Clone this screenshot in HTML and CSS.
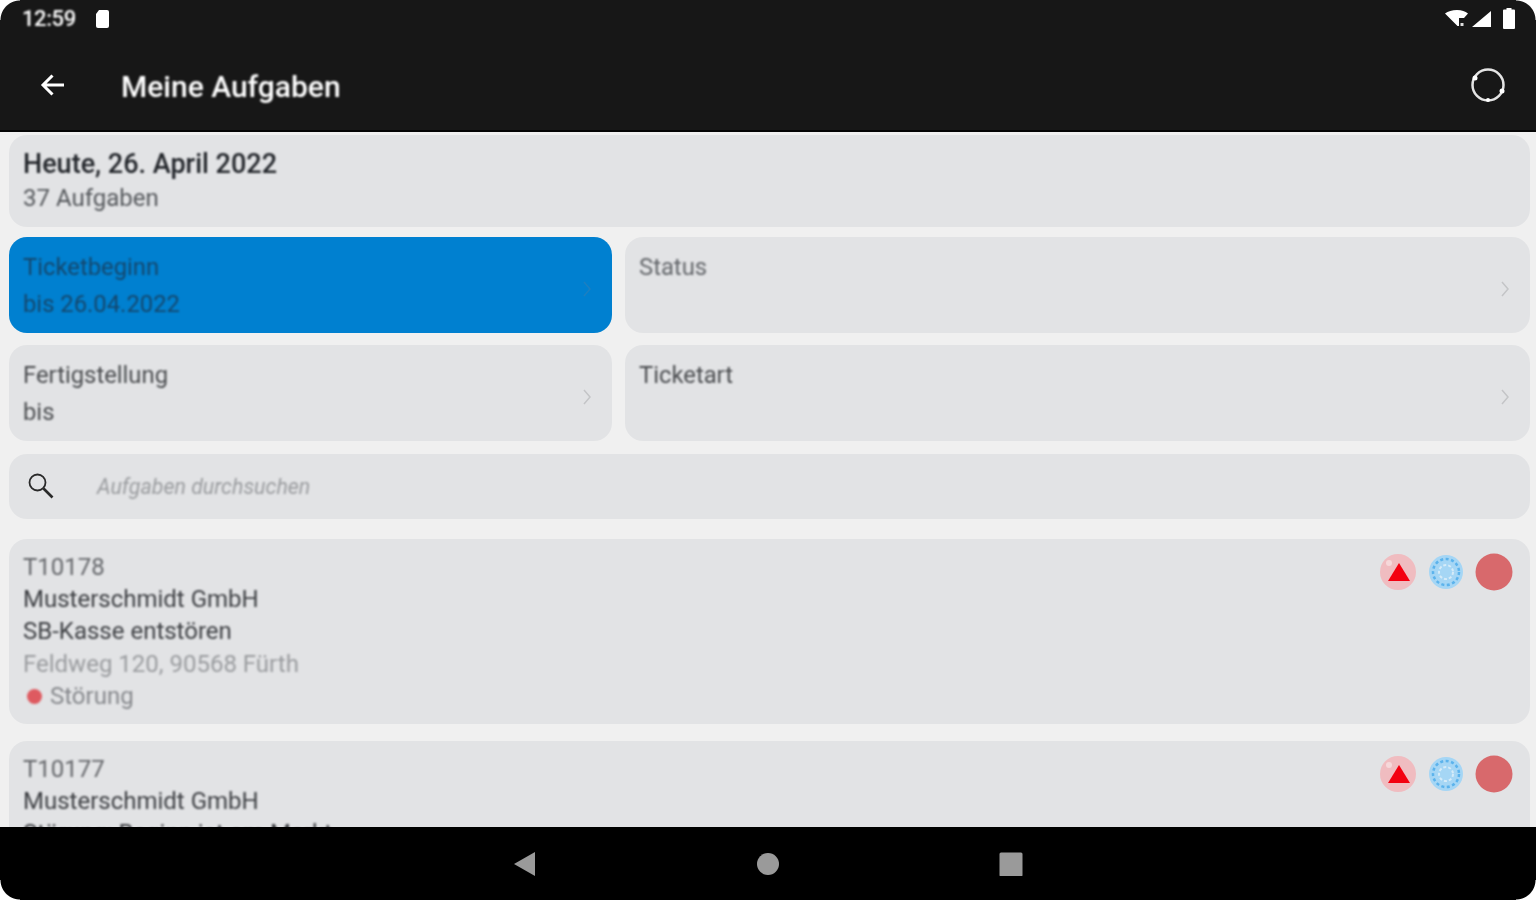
FILE: index.html
```html
<!DOCTYPE html>
<html lang="de">
<head>
<meta charset="utf-8">
<title>Meine Aufgaben</title>
<link rel="stylesheet" href="styles.css">
</head>
<body>
<div class="device">
  <header class="top">
    <div class="status">
      <div class="status-left">
        <span class="time">12:59</span>
        <svg class="sd" width="18" height="20" viewBox="0 0 18 20"><path d="M5 1h8a2 2 0 0 1 2 2v14a2 2 0 0 1-2 2H4a2 2 0 0 1-2-2V5z" fill="#fff"/></svg>
      </div>
      <div class="status-right">
        <svg class="wifi" width="24" height="18" viewBox="0 0 24 18"><path d="M0 3.500C3 1.200 7 0 12 0s8 1.200 11 3.500L19 8h-5v8h-1.500z" fill="#fff"/><path d="M15.500 13h3v3h-3z" fill="#ddd"/></svg>
        <svg class="signal" width="20" height="18" viewBox="0 0 20 18"><path d="M0 17 19 1v16z" fill="#fff"/></svg>
        <svg width="14" height="22" viewBox="0 0 14 22"><path d="M4.500 0h5v1.500H12a1 1 0 0 1 1 1V20a1 1 0 0 1-1 1H2a1 1 0 0 1-1-1V2.500a1 1 0 0 1 1-1h2.500z" fill="#fff"/></svg>
      </div>
    </div>
    <div class="toolbar">
      <svg class="back" width="28" height="28" viewBox="0 0 28 28"><path d="M25 14H5M13.500 4.500 4 14l9.500 9.500" fill="none" stroke="#fff" stroke-width="3"/></svg>
      <h1 class="title">Meine Aufgaben</h1>
      <svg class="sync" width="38" height="38" viewBox="0 0 38 38"><circle cx="19" cy="19" r="15.500" fill="none" stroke="#e4e4e4" stroke-width="2.500"/><circle cx="6" cy="12" r="2.500" fill="#fff"/><circle cx="33" cy="25" r="2.500" fill="#fff"/><circle cx="19" cy="34" r="2" fill="#fff"/></svg>
    </div>
  </header>

  <main class="content">
    <section class="card today">
      <div class="today-date">Heute, 26. April 2022</div>
      <div class="today-count">37 Aufgaben</div>
    </section>

    <section class="filters">
      <div class="card filter active">
        <div class="filter-text"><span>Ticketbeginn</span><span>bis 26.04.2022</span></div>
        <svg class="chev" width="10" height="18" viewBox="0 0 10 18"><path d="m2 2 6 7-6 7" fill="none" stroke="currentColor" stroke-width="1.500"/></svg>
      </div>
      <div class="card filter">
        <div class="filter-text"><span class="soft">Status</span><span></span></div>
        <svg class="chev" width="10" height="18" viewBox="0 0 10 18"><path d="m2 2 6 7-6 7" fill="none" stroke="currentColor" stroke-width="1.500"/></svg>
      </div>
      <div class="card filter">
        <div class="filter-text"><span>Fertigstellung</span><span>bis</span></div>
        <svg class="chev" width="10" height="18" viewBox="0 0 10 18"><path d="m2 2 6 7-6 7" fill="none" stroke="currentColor" stroke-width="1.500"/></svg>
      </div>
      <div class="card filter">
        <div class="filter-text"><span>Ticketart</span><span></span></div>
        <svg class="chev" width="10" height="18" viewBox="0 0 10 18"><path d="m2 2 6 7-6 7" fill="none" stroke="currentColor" stroke-width="1.500"/></svg>
      </div>
    </section>

    <section class="card search">
      <svg width="30" height="30" viewBox="0 0 30 30"><circle cx="11.500" cy="11.500" r="8" fill="none" stroke="#2a2a2a" stroke-width="1.800"/><path d="m17.500 17.500 9 9" stroke="#2a2a2a" stroke-width="2.600"/></svg>
      <span class="search-hint">Aufgaben durchsuchen</span>
    </section>

    <article class="card ticket">
      <div class="ticket-text">
        <div class="line id">T10178</div>
        <div class="line">Musterschmidt GmbH</div>
        <div class="line">SB-Kasse entstören</div>
        <div class="line addr">Feldweg 120, 90568 Fürth</div>
        <div class="line state"><i class="dot"></i>Störung</div>
      </div>
      <div class="badges">
        <svg class="badge" width="38" height="38" viewBox="0 0 38 38"><circle cx="19" cy="19" r="18" fill="#f0bcc0"/><path d="M20 10 31 28H9z" fill="#f30010"/><circle cx="10" cy="10" r="3" fill="#f6d8da"/></svg>
        <svg class="badge" width="36" height="38" viewBox="0 0 36 38"><circle cx="18" cy="19" r="17" fill="#a5d6f5"/><circle cx="18" cy="19" r="13" fill="none" stroke="#5cb3ec" stroke-width="2.500" stroke-dasharray="3 2.500"/><circle cx="18" cy="19" r="7" fill="none" stroke="#d5ebf8" stroke-width="2" stroke-dasharray="3 2"/></svg>
        <svg class="badge" width="38" height="38" viewBox="0 0 38 38"><circle cx="19" cy="19" r="18.500" fill="#d8696c"/></svg>
      </div>
    </article>

    <article class="card ticket">
      <div class="ticket-text">
        <div class="line id">T10177</div>
        <div class="line">Musterschmidt GmbH</div>
        <div class="line">Störung: Beginn ist am Markt</div>
      </div>
      <div class="badges">
        <svg class="badge" width="38" height="38" viewBox="0 0 38 38"><circle cx="19" cy="19" r="18" fill="#f0bcc0"/><path d="M20 10 31 28H9z" fill="#f30010"/><circle cx="10" cy="10" r="3" fill="#f6d8da"/></svg>
        <svg class="badge" width="36" height="38" viewBox="0 0 36 38"><circle cx="18" cy="19" r="17" fill="#a5d6f5"/><circle cx="18" cy="19" r="13" fill="none" stroke="#5cb3ec" stroke-width="2.500" stroke-dasharray="3 2.500"/><circle cx="18" cy="19" r="7" fill="none" stroke="#d5ebf8" stroke-width="2" stroke-dasharray="3 2"/></svg>
        <svg class="badge" width="38" height="38" viewBox="0 0 38 38"><circle cx="19" cy="19" r="18.500" fill="#d8696c"/></svg>
      </div>
    </article>
  </main>

  <nav class="nav">
    <svg width="24" height="26" viewBox="0 0 24 26"><path d="M22 1v24L1 13z" fill="#9a9a9a"/></svg>
    <svg width="24" height="24" viewBox="0 0 24 24"><circle cx="12" cy="12" r="11" fill="#9a9a9a"/></svg>
    <svg width="24" height="24" viewBox="0 0 24 24"><rect x="0.500" y="0.500" width="23" height="24" rx="1.500" fill="#9a9a9a"/></svg>
  </nav>

  <i class="corner tl"></i><i class="corner tr"></i><i class="corner bl"></i><i class="corner br"></i>
</div>
</body>
</html>
```

FILE: styles.css
```css
* { box-sizing: border-box; }
html, body { margin: 0; height: 100%; }
body { background: #fff; font-family: Roboto, "Liberation Sans", sans-serif; overflow: hidden; }

.device { position: relative; width: 1536px; height: 900px; display: flex; flex-direction: column; overflow: hidden; background: #f0f0f0; }

.top { height: 132px; flex: none; background: #171717; color: #fff; border-bottom: 2px solid #050505; display: flex; flex-direction: column; }
.status { height: 37px; display: flex; align-items: center; justify-content: space-between; padding: 0 20px 0 22px; }
.status-left, .status-right { display: flex; align-items: center; }
.status-left { gap: 18px; }
.time { font-size: 22px; font-weight: 500; letter-spacing: -0.4px; filter: blur(0.8px); }
.sd, .status-right { filter: blur(0.5px); }
.wifi { margin-right: 3px; }
.signal { margin-right: 10px; }
.toolbar { flex: 1; display: flex; align-items: center; padding: 6px 29px 0 39px; }
.back { flex: none; margin-top: -4px; filter: blur(0.5px); }
.title { margin: 0 0 0 54px; font-size: 30px; font-weight: 500; flex: 1; filter: blur(0.8px); }
.sync { margin-top: -4px; filter: blur(0.5px); }

.content { flex: 1; min-height: 0; overflow: hidden; display: flex; flex-direction: column; padding: 3px 6px 0 9px; background: #f0f0f0; }
.card { background: #e2e3e5; border-radius: 18px; }

.today { flex: none; height: 92px; padding: 13px 14px 0; }
.today-date { font-size: 27px; font-weight: 500; line-height: 32px; color: #23262b; filter: blur(0.8px); }
.today-count { font-size: 24px; line-height: 36px; color: #55585c; filter: blur(0.8px); }

.filters { flex: none; display: grid; grid-template-columns: 603px 905px; grid-auto-rows: 95.500px; column-gap: 13px; row-gap: 12.500px; margin-top: 10px; }
.filter { display: flex; align-items: center; justify-content: space-between; padding: 16px 20px 0 14px; color: #4a4c4f; font-size: 23.800px; }
.filter-text { align-self: flex-start; display: flex; flex-direction: column; gap: 8px; filter: blur(0.8px); }
.filter-text span { line-height: 29px; min-height: 29px; }
.soft { color: #63666a; }
.chev { color: #c4c5c7; margin-top: -8px; filter: blur(0.5px); }
.active { background: #0080d0; color: #14476d; }
.active .chev { color: #1d7fc0; }

.search { flex: none; height: 65px; margin-top: 13px; display: flex; align-items: center; padding-left: 17px; gap: 41px; }
.search-hint { font-size: 21.400px; font-style: italic; color: #9a9c9f; filter: blur(0.8px); }

.ticket { flex: none; height: 185px; margin-top: 20px; display: flex; justify-content: space-between; padding: 12px 17px 0 14px; }
.ticket + .ticket { margin-top: 17px; }
.ticket-text { filter: blur(0.8px); }
.line { font-size: 24px; line-height: 32.400px; color: #3e4044; }
.id { color: #65676b; }
.addr { color: #9a9c9f; }
.state { color: #87898d; display: flex; align-items: center; }
.dot { width: 15px; height: 15px; border-radius: 50%; background: #de5a60; margin: 0 8px 0 4px; }
.badges { display: flex; gap: 11px; height: 38px; margin-top: 2px; filter: blur(0.5px); }

.nav { flex: none; height: 73px; background: #000; display: flex; align-items: center; justify-content: center; gap: 219px; filter: blur(0.4px); }

.corner { position: absolute; width: 20px; height: 20px; }
.tl { top: 0; left: 0; background: radial-gradient(circle at 100% 100%, transparent 19px, #fff 20px); }
.tr { top: 0; right: 0; background: radial-gradient(circle at 0 100%, transparent 19px, #fff 20px); }
.bl { bottom: 0; left: 0; background: radial-gradient(circle at 100% 0, transparent 19px, #fff 20px); }
.br { bottom: 0; right: 0; background: radial-gradient(circle at 0 0, transparent 19px, #fff 20px); }
```
